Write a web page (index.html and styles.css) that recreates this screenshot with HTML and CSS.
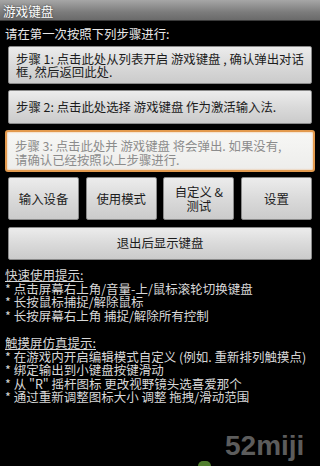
FILE: index.html
```html
<!DOCTYPE html>
<html lang="zh">
<head>
<meta charset="utf-8">
<link rel="stylesheet" href="styles.css">
</head>
<body>
<div class="screen">
  <div class="titlebar">游戏键盘</div>
  <div class="intro">请在第一次按照下列步骤进行:</div>
  <div class="btn step step1">步骤 1: 点击此处从列表开启 游戏键盘 , 确认弹出对话<br>框, 然后返回此处.</div>
  <div class="btn step step2">步骤 2: 点击此处选择 游戏键盘 作为激活输入法.</div>
  <div class="step3">步骤 3: 点击此处并 游戏键盘 将会弹出. 如果没有,<br>请确认已经按照以上步骤进行.</div>
  <div class="row">
    <div class="btn cell">输入设备</div>
    <div class="btn cell">使用模式</div>
    <div class="btn cell">自定义 &amp;<br>测试</div>
    <div class="btn cell">设置</div>
  </div>
  <div class="btn wide">退出后显示键盘</div>
  <div class="tips">
    <div class="line head">快速使用提示:</div>
    <div class="line">* 点击屏幕右上角/音量-上/鼠标滚轮切换键盘</div>
    <div class="line">* 长按鼠标捕捉/解除鼠标</div>
    <div class="line">* 长按屏幕右上角 捕捉/解除所有控制</div>
    <div class="blank"></div>
    <div class="line head">触摸屏仿真提示:</div>
    <div class="line">* 在游戏内开启编辑模式自定义 (例如. 重新排列触摸点)</div>
    <div class="line">* 绑定输出到小键盘按键滑动</div>
    <div class="line">* 从 "R" 摇杆图标 更改视野镜头选喜爱那个</div>
    <div class="line">* 通过重新调整图标大小 调整 拖拽/滑动范围</div>
  </div>
  <div class="watermark">52miji</div>
  <div class="greenblob"></div>
</div>
</body>
</html>
```
FILE: styles.css
```css
html, body {
  margin: 0;
  padding: 0;
  background: #000;
}
body {
  font-family: "Noto Sans CJK SC", "Noto Sans", "DejaVu Sans", sans-serif;
  font-size: 12.4px;
}
.screen {
  position: relative;
  width: 320px;
  height: 466px;
  overflow: hidden;
  background: #000;
}
.titlebar {
  height: 21px;
  line-height: 21px;
  padding-left: 3px;
  color: #fff;
  font-size: 12.6px;
  background: linear-gradient(#a6a6a6, #7c7c7c 60%, #6a6a6a);
  border-bottom: 1px solid #3a3a3a;
  box-sizing: border-box;
  text-shadow: 0 0 2px #333;
}
.intro {
  color: #e8e8e8;
  padding: 5px 0 0 5px;
  height: 16px;
  line-height: 16px;
}
.btn {
  box-sizing: border-box;
  color: #1c1c1c;
  background: linear-gradient(#ececec, #dadada 50%, #cbcbcb);
  border: 1px solid #8a8a8a;
  border-radius: 2px;
}
.step {
  margin: 4px 8px 0 8px;
}
.step1 {
  height: 38px;
  padding: 6px 6px 0 7px;
  line-height: 13px;
}
.step2 {
  margin-top: 6px;
  height: 34px;
  line-height: 32px;
  padding-left: 7px;
}
.step3 {
  box-sizing: border-box;
  margin: 6px 5px 0 5px;
  height: 42px;
  padding: 7px 6px 0 8px;
  line-height: 14px;
  color: #8c8c8c;
  background: linear-gradient(#f7f7f5, #ededeb);
  border: 2px solid #e39a4e;
  border-radius: 3px;
  box-shadow: 0 0 2px #f0b070 inset;
}
.row {
  display: grid;
  grid-template-columns: repeat(4, 1fr);
  gap: 6.5px;
  margin: 5px 8px 0 8px;
  height: 43px;
}
.cell {
  display: flex;
  align-items: center;
  justify-content: center;
  text-align: center;
  line-height: 14px;
}
.wide {
  margin: 7px 8px 0 8px;
  height: 33px;
  line-height: 31px;
  text-align: center;
}
.tips {
  margin-top: 8px;
  padding-left: 5px;
  color: #d8d8d8;
  line-height: 13.6px;
  font-size: 12.5px;
  white-space: nowrap;
}
.tips .line {
  height: 13.6px;
}
.tips .head {
  text-decoration: underline;
  text-underline-offset: 1px;
}
.tips .blank {
  height: 13.6px;
}
.watermark {
  position: absolute;
  left: 225px;
  top: 430px;
  font-family: "Liberation Sans", Arial, sans-serif;
  font-weight: bold;
  font-size: 28px;
  line-height: 32px;
  color: #5c5c5c;
}
.greenblob {
  position: absolute;
  left: 198px;
  top: 461px;
  width: 13px;
  height: 10px;
  border-radius: 6px;
  background: #4f7d2c;
}
```
